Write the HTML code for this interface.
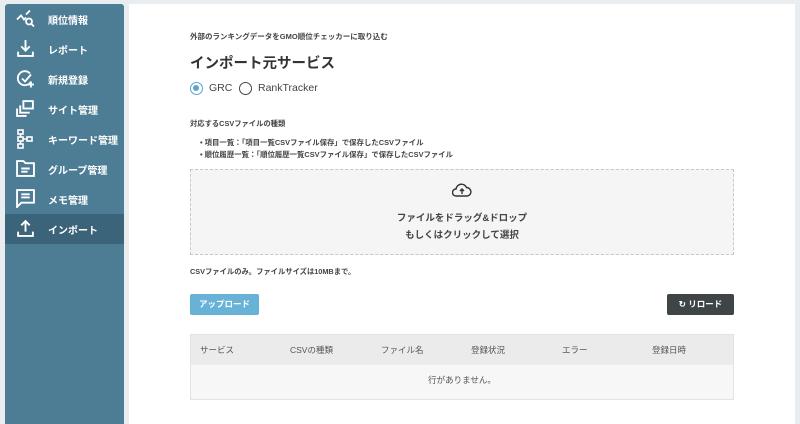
<!DOCTYPE html>
<html><head><meta charset="utf-8"><style>
*{margin:0;padding:0;box-sizing:border-box}
body{width:800px;height:413px;background:#e9edf0;font-family:"Liberation Sans","Noto Sans CJK JP",sans-serif;position:relative;overflow:hidden;color:#333}
.side{position:absolute;left:5px;top:4px;width:119px;height:420px;background:#4d7c95;border-radius:3px 3px 0 0}
.it{position:absolute;left:0;width:119px;height:30px;color:#fff;font-size:10px;font-weight:bold}
.it span{position:absolute;left:43px;top:8px}
.it svg{position:absolute;left:11px;top:5px}
.act{background:#3b6379}
.main{position:absolute;left:129px;top:4px;width:666px;height:420px;background:#fff}
.a{position:absolute}
</style></head><body>
<div class="side">
<div class="it" style="top:0"><svg width="20" height="19" viewBox="0 0 20 18" fill="none" stroke="#fff" stroke-width="1.8"><path d="M1 10l4-4 3 4 2-2M10 5l4-4"/><circle cx="13" cy="12" r="3"/><path d="M15 14l3 3"/></svg><span>順位情報</span></div>
<div class="it" style="top:30px"><svg width="19" height="19" viewBox="0 0 18 18" fill="none" stroke="#fff" stroke-width="1.8"><path d="M9 1v10M5 7l4 4 4-4M2 12v4h14v-4"/></svg><span>レポート</span></div>
<div class="it" style="top:60px"><svg width="20" height="19" viewBox="0 0 20 18" fill="none" stroke="#fff" stroke-width="1.8"><path d="M14 4a7 7 0 1 0 1 8"/><path d="M6 9l3 3 6-7M15 12v6M12 15h6"/></svg><span>新規登録</span></div>
<div class="it" style="top:90px"><svg width="19" height="19" viewBox="0 0 18 18" fill="none" stroke="#fff" stroke-width="1.8"><rect x="7" y="2" width="9" height="7"/><path d="M4 6v7h9M1 9v7h9"/></svg><span>サイト管理</span></div>
<div class="it" style="top:120px"><svg width="18" height="20" viewBox="0 0 18 20" fill="none" stroke="#fff" stroke-width="1.6"><rect x="2" y="1" width="5" height="4"/><rect x="2" y="8" width="5" height="4"/><rect x="2" y="15" width="5" height="4"/><rect x="11" y="8" width="5" height="4"/><path d="M4.5 5v3M4.5 12v3M7 10h4"/></svg><span>キーワード管理</span></div>
<div class="it" style="top:150px"><svg width="19" height="19" viewBox="0 0 18 18" fill="none" stroke="#fff" stroke-width="1.8"><path d="M1 2h6l2 2h8v12H1z"/><path d="M5 9h8M5 12h6"/></svg><span>グループ管理</span></div>
<div class="it" style="top:180px"><svg width="19" height="19" viewBox="0 0 18 18" fill="none" stroke="#fff" stroke-width="1.8"><path d="M1 1h16v12H5l-4 4z"/><path d="M5 5h8M5 8h8"/></svg><span>メモ管理</span></div>
<div class="it act" style="top:210px"><svg width="19" height="19" viewBox="0 0 18 18" fill="none" stroke="#fff" stroke-width="1.8"><path d="M9 12V2M5 6l4-4 4 4M2 12v4h14v-4"/></svg><span>インポート</span></div>
</div>
<div class="main"></div>
<div class="a" style="left:190px;top:31px;font-size:7.5px;font-weight:bold;color:#444">外部のランキングデータをGMO順位チェッカーに取り込む</div>
<div class="a" style="left:190px;top:52px;font-size:14.5px;font-weight:bold;color:#333">インポート元サービス</div>
<div class="a" style="left:190px;top:82px;width:13px;height:13px;border:1.5px solid #5aa6d1;border-radius:50%"><div style="margin:2px;width:6px;height:6px;border-radius:50%;background:#5aa6d1"></div></div>
<div class="a" style="left:209px;top:82px;font-size:10.5px;color:#444">GRC</div>
<div class="a" style="left:239px;top:82px;width:13px;height:13px;border:1.5px solid #444;border-radius:50%"></div>
<div class="a" style="left:258px;top:82px;font-size:10.5px;color:#444">RankTracker</div>
<div class="a" style="left:190px;top:119px;font-size:7.3px;font-weight:bold;color:#444">対応するCSVファイルの種類</div>
<div class="a" style="left:200px;top:137px;font-size:7.4px;font-weight:bold;color:#444;line-height:12px">• 項目一覧：「項目一覧CSVファイル保存」で保存したCSVファイル<br>• 順位履歴一覧：「順位履歴一覧CSVファイル保存」で保存したCSVファイル</div>
<div class="a" style="left:190px;top:169px;width:544px;height:86px;border:1px dashed #c8c8c8;background:#f5f5f5;text-align:center;font-size:9.5px;font-weight:bold;color:#444;line-height:17px">
<svg style="margin-top:13px" width="20" height="14" viewBox="0 0 20 14" fill="none" stroke="#333" stroke-width="1.4"><path d="M5 13H4a3.5 3.5 0 0 1 0-7 5.5 5.5 0 0 1 10.5-1.5A4.3 4.3 0 0 1 15.5 13H5z"/><path d="M10 11V6M8 8l2-2 2 2"/></svg>
<div style="margin-top:7px">ファイルをドラッグ&amp;ドロップ<br>もしくはクリックして選択</div></div>
<div class="a" style="left:190px;top:267px;font-size:7.3px;font-weight:bold;color:#444">CSVファイルのみ。ファイルサイズは10MBまで。</div>
<div class="a" style="left:190px;top:294px;width:69px;height:21px;background:#68b2d8;border-radius:2px;color:#fff;font-size:8.5px;font-weight:bold;line-height:21px;text-align:center">アップロード</div>
<div class="a" style="left:667px;top:294px;width:67px;height:21px;background:#3f4447;border-radius:2px;color:#fff;font-size:8.5px;font-weight:bold;line-height:21px;text-align:center">↻ リロード</div>
<div class="a" style="left:190px;top:334px;width:544px;height:66px;border:1px solid #e3e3e3;background:#f7f7f7">
<div style="height:30px;background:#ebebeb;font-size:8.5px;color:#555;position:relative">
<span class="a" style="left:9px;top:9px">サービス</span><span class="a" style="left:99px;top:9px">CSVの種類</span><span class="a" style="left:190px;top:9px">ファイル名</span><span class="a" style="left:280px;top:9px">登録状況</span><span class="a" style="left:371px;top:9px">エラー</span><span class="a" style="left:461px;top:9px">登録日時</span>
</div>
<div style="text-align:center;font-size:8.5px;color:#555;margin-top:9px">行がありません。</div>
</div>
</body></html>
